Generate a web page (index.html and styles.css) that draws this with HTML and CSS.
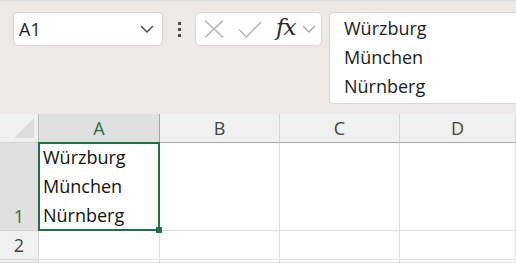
FILE: index.html
```html
<!DOCTYPE html>
<html lang="de">
<head>
  <meta charset="UTF-8" />
  <title>Tabelle</title>
  <link rel="stylesheet" href="styles.css">
</head>
<body>

  <div class="formula-row">
    <div class="namebox">
      <span>A1</span>
      <svg width="14" height="8" viewBox="0 0 14 8"><path d="M1 1l6 6 6-6" fill="none" stroke="#444" stroke-width="1.4"/></svg>
    </div>

    <div class="more">
      <i></i><i></i><i></i>
    </div>

    <div class="fx-tools">
      <svg class="tool" width="20" height="18" viewBox="0 0 20 18"><path d="M1 0.5l18 17M19 0.5l-18 17" fill="none" stroke="#b5b3b2" stroke-width="1.5"/></svg>
      <svg class="tool" width="24" height="17" viewBox="0 0 24 17"><path d="M1 8.5l7.5 7.5 14.5-15" fill="none" stroke="#b5b3b2" stroke-width="1.5"/></svg>
      <span class="fx">fx</span>
      <svg class="small-chev" width="14" height="8" viewBox="0 0 14 8"><path d="M1 1l6 6 6-6" fill="none" stroke="#a9a7a6" stroke-width="1.4"/></svg>
    </div>

    <div class="formula-input">
      <div>Würzburg</div>
      <div>München</div>
      <div>Nürnberg</div>
    </div>
  </div>

  <div class="sheet">
    <div class="corner"><span class="tri"></span></div>
    <div class="col-head active">A</div>
    <div class="col-head">B</div>
    <div class="col-head">C</div>
    <div class="col-head">D</div>

    <div class="row-head active">1</div>
    <div class="cell selected">
      <div>Würzburg</div>
      <div>München</div>
      <div>Nürnberg</div>
      <span class="handle"></span>
    </div>
    <div class="cell"></div>
    <div class="cell"></div>
    <div class="cell"></div>

    <div class="row-head">2</div>
    <div class="cell"></div>
    <div class="cell"></div>
    <div class="cell"></div>
    <div class="cell"></div>

    <div class="row-head"></div>
    <div class="cell"></div>
    <div class="cell"></div>
    <div class="cell"></div>
    <div class="cell"></div>
  </div>

</body>
</html>
```

FILE: styles.css
```css
* {
  box-sizing: border-box;
  font-family: 'Open Sans', 'Noto Sans', sans-serif;
}
body {
  margin: 0;
  background: #eee8e6;
  height: 263px;
  overflow: hidden;
  color: #1c1c1c;
}

/* formula bar */
.formula-row {
  display: flex;
  align-items: flex-start;
  height: 114px;
  padding: 12px 0 0 13px;
  box-shadow: inset 0 2px 2px -1px rgba(0,0,0,0.08);
}
.namebox {
  width: 150px;
  height: 34px;
  background: white;
  border: 1px solid #d9d5d4;
  border-radius: 5px;
  display: flex;
  align-items: center;
  justify-content: space-between;
  padding: 0 8px 0 5px;
  font-size: 18px;
}
.more {
  width: 32px;
  height: 34px;
  display: flex;
  flex-direction: column;
  align-items: center;
  justify-content: center;
  gap: 3px;
}
.more i {
  width: 3px;
  height: 3px;
  background: #4a4a4a;
}
.fx-tools {
  width: 127px;
  height: 34px;
  background: white;
  border: 1px solid #d9d5d4;
  border-radius: 5px;
  display: flex;
  align-items: center;
  padding-left: 8px;
}
.tool {
  margin-right: 14px;
}
.fx {
  font-family: 'DejaVu Serif', 'Liberation Serif', serif;
  font-style: italic;
  font-size: 23px;
  color: #2a2a2a;
  letter-spacing: -1px;
  margin-top: -5px;
}
.small-chev {
  margin-left: 7px;
}
.formula-input {
  flex: 1;
  margin-left: 7px;
  height: 92px;
  background: white;
  border: 1px solid #d9d5d4;
  border-right: none;
  border-radius: 5px 0 0 5px;
  padding: 1px 0 0 14px;
  font-size: 18px;
  line-height: 29px;
}

/* sheet grid */
.sheet {
  display: grid;
  grid-template-columns: 39px 121px 120px 120px 1fr;
  grid-template-rows: 29px 88px 29px 3px;
  background: white;
}
.corner, .col-head, .row-head {
  background: #f0f0f0;
  border-right: 1px solid #d4d4d4;
  border-bottom: 1px solid #d4d4d4;
  color: #444;
  font-size: 18px;
}
.corner {
  position: relative;
  border-right-color: #bdbdbd;
}
.tri {
  position: absolute;
  right: 4px;
  bottom: 4px;
  width: 0;
  height: 0;
  border-left: 20px solid transparent;
  border-bottom: 20px solid #dddddd;
}
.col-head {
  text-align: center;
  line-height: 28px;
  border-bottom-color: #a6a6a6;
}
.col-head.active {
  background: #e0e0e0;
  color: #1e7145;
  border-right-color: #a6a6a6;
}
.row-head {
  display: flex;
  align-items: flex-end;
  justify-content: center;
  line-height: 28px;
}
.row-head.active {
  background: #e0e0e0;
  color: #1e7145;
}
.cell {
  border-right: 1px solid #dedede;
  border-bottom: 1px solid #dedede;
}
.cell.selected {
  position: relative;
  display: flex;
  flex-direction: column;
  justify-content: flex-end;
  padding-left: 4px;
  font-size: 18px;
  line-height: 29px;
  color: #111;
}
.cell.selected::after {
  content: "";
  position: absolute;
  left: -1px;
  top: -1px;
  right: -1px;
  bottom: -1px;
  border: 2px solid #1e7145;
}
.handle {
  position: absolute;
  right: -3px;
  bottom: -3px;
  width: 6px;
  height: 6px;
  background: #1e7145;
  z-index: 1;
}
```
